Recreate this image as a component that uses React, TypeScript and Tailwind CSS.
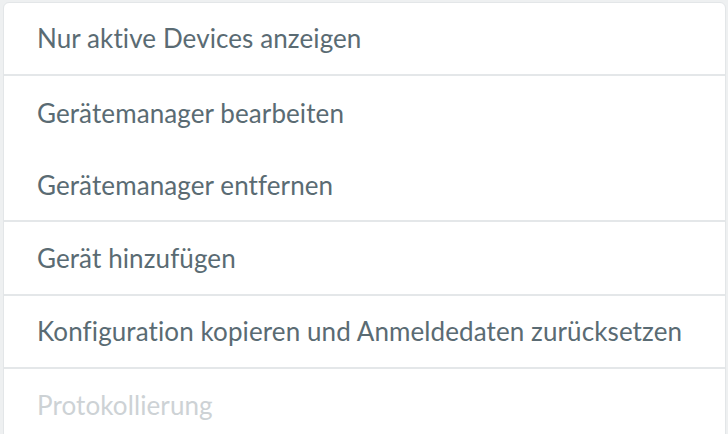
const items = [
  { label: "Nur aktive Devices anzeigen", h: "h-[73px]", divider: true },
  { label: "Gerätemanager bearbeiten", h: "h-[74px]", divider: false },
  { label: "Gerätemanager entfernen", h: "h-[72px]", divider: true },
  { label: "Gerät hinzufügen", h: "h-[74px]", divider: true },
  { label: "Konfiguration kopieren und Anmeldedaten zurücksetzen", h: "h-[73px]", divider: true },
  { label: "Protokollierung", h: "h-[72px]", divider: false, disabled: true },
];

export default function App() {
  return (
    <div className="h-[434px] w-[728px] overflow-hidden bg-[#eef0f1] pl-[3px] pr-[2px] pt-[2px]">
      <div
        className="rounded-md border border-[#e3e6e8] bg-white"
        style={{ fontFamily: "Lato, 'Open Sans', sans-serif" }}
      >
        {items.map((item) => (
          <div
            key={item.label}
            className={`${item.h} flex items-center pl-[33px] text-[26px] tracking-[0.1px] ${
              item.divider ? "border-b-2 border-[#e4e7e9]" : ""
            } ${item.disabled ? "text-[#cdd2d5]" : "text-[#5a6b73]"}`}
          >
            {item.label}
          </div>
        ))}
      </div>
    </div>
  );
}
